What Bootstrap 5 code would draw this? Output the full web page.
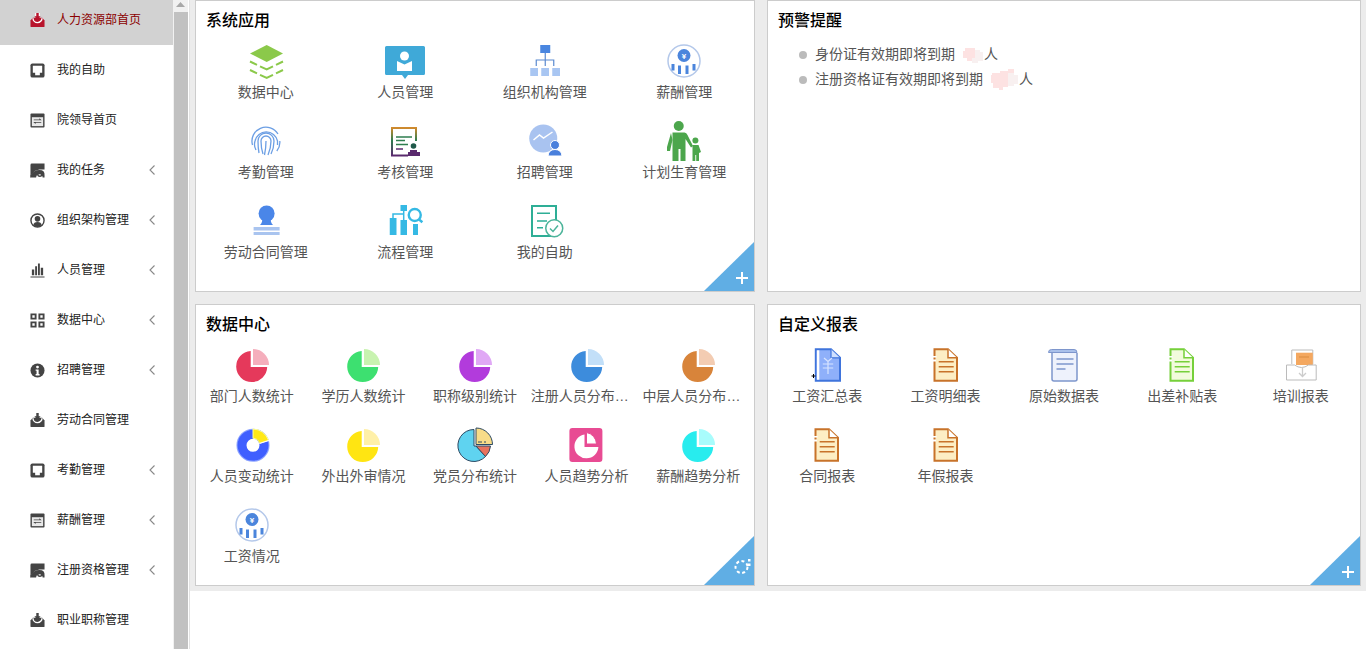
<!DOCTYPE html>
<html lang="zh-CN">
<head>
  <meta charset="UTF-8" />
  <meta name="viewport" content="width=device-width, initial-scale=1.0" />
  <title>人力资源部首页</title>
  <link href="https://cdn.jsdelivr.net/npm/bootstrap@5.3.0/dist/css/bootstrap.min.css" rel="stylesheet" />
  <style>
    html, body { height: 649px; overflow: hidden; }
    body { font-family: "Liberation Sans", "Noto Sans CJK SC", sans-serif; background: #fff; }
    .sprite { position: absolute; width: 0; height: 0; }

    /* left menu */
    .side-wrap { width: 190px; height: 649px; flex: none; }
    .side-menu { width: 173px; flex: none; overflow: hidden; }
    .side-link { height: 50px; padding: 0 18px 0 30px; color: #222; font-size: 12px; gap: 12px; }
    .side-link:hover { color: #222; }
    .side-link.is-on { height: 45px; padding-bottom: 5px; background: #d2d2d2; color: #8b0000; }
    .side-link.is-on .side-ico { color: #b8142c; }
    .side-ico { width: 15px; height: 15px; color: #444; flex: none; }
    .side-arrow { width: 6px; height: 10px; margin-left: auto; fill: none; stroke: #888; stroke-width: 1.1; flex: none; }
    .side-track { width: 15px; background: #f1f1f1; flex: none; }
    .side-track svg { display: block; width: 15px; height: 12px; fill: #a8a8a8; }
    .side-thumb { flex: 1; margin-left: 1px; background: #c1c1c1; }
    .side-edge { width: 2px; border-right: 1px solid #e2e2e2; flex: none; }

    /* dashboard */
    .board { flex: 1; height: 591px; background: #ececec; padding: 0 5px 5px; display: grid; grid-template-columns: 560px 594px; grid-template-rows: 292px 282px; gap: 12px; }
    .panel { border: 1px solid #ccc; border-radius: 0; overflow: hidden; }
    .panel-title { height: 39px; line-height: 39px; padding-left: 10px; font-size: 16px; font-weight: 500; color: #000; margin: 0; }
    .app-cell { height: 80px; font-size: 14px; color: #555; text-align: center; }
    .app-ico { display: block; width: 44px; height: 44px; margin: 0 auto -2px; }
    .app-name { line-height: 20px; }
    .corner-tag { position: absolute; right: 0; bottom: 0; width: 50px; height: 49px; }

    .warn-list { margin: 2px 0 0; padding-left: 31px; font-size: 14px; color: #555; }
    .warn-list li { height: 25px; }
    .warn-dot { width: 8px; height: 8px; border-radius: 50%; background: #bbb; flex: none; }
    .warn-blob { height: 24px; margin-left: 7px; vertical-align: middle; }

    .pie-red { --a: #e5395b; --b: #f5aebc; }
    .pie-green { --a: #3de070; --b: #c8f3b0; }
    .pie-purple { --a: #b23bdc; --b: #e0a8f5; }
    .pie-blue { --a: #3d8cdc; --b: #c2dff8; }
    .pie-orange { --a: #d8843a; --b: #f3ccb2; }
    .pie-yellow { --a: #ffe512; --b: #fff0a8; }
    .pie-cyan { --a: #28ecee; --b: #a8fcfc; }
    .doc-orange { --a: #c8732a; --b: #fdeec4; }
    .doc-green { --a: #76d03a; --b: #f2fbdc; }
  </style>
</head>
<body>
  <svg class="sprite" aria-hidden="true">
    <defs>
      <linearGradient id="g-check" x1="0" y1="0" x2="0" y2="1">
        <stop offset="0" stop-color="#d08a2e" />
        <stop offset=".45" stop-color="#2e7d4f" />
        <stop offset="1" stop-color="#5a2a6e" />
      </linearGradient>
    </defs>

    <!-- menu icons -->
    <symbol id="m-tray" viewBox="0 0 16 16">
      <path fill="currentColor" d="M.5 8 3 5h10l2.500 3v6q0 1-1 1h-13q-1 0-1-1z" />
      <path fill="none" stroke="#fff" stroke-width="1.500" d="M3.200 5.500a4.800 4.800 0 0 0 9.600 0" />
      <path fill="#fff" d="M5.500 0h5v4h-5z" />
      <path fill="currentColor" d="M6.700 0h2.600v3.500h2L8 7.500l-3.300-4h2z" />
    </symbol>
    <symbol id="m-port" viewBox="0 0 16 16">
      <rect fill="currentColor" x=".5" y=".5" width="15" height="15" rx="2" />
      <path fill="#fff" d="M3 3h10v7.500h-2.500V13h-5v-2.500H3z" />
    </symbol>
    <symbol id="m-swap" viewBox="0 0 16 16">
      <rect fill="currentColor" x=".5" y=".5" width="15" height="15" rx="1" />
      <rect fill="#e8e8e8" x="2" y="4.500" width="12" height="9.500" />
      <path fill="currentColor" d="M4 7h6V5.500L12.500 7.800H4zM12 10.300H6v1.500L3.500 9.500H12z" />
    </symbol>
    <symbol id="m-scan" viewBox="0 0 16 16">
      <path fill="currentColor" d="M2 .5h13.500V7H10L5 8.500 1 13V15.500H.5V2q0-1.500 1.500-1.500z" />
      <path fill="currentColor" d="M.5 15.500V13Q4 7.500 10 7.500T15.500 13v2.500h-2q-.5-3.500-3.500-3.500t-3.500 3.500z" />
      <circle fill="none" stroke="currentColor" stroke-width="1.500" cx="10.500" cy="12" r="2.200" />
    </symbol>
    <symbol id="m-user" viewBox="0 0 16 16">
      <circle fill="none" stroke="currentColor" stroke-width="1.500" cx="8" cy="8" r="7" />
      <circle fill="currentColor" cx="8" cy="6.200" r="3" />
      <path fill="currentColor" d="M3.500 13q.5-3.500 4.500-3.500t4.500 3.500a7 7 0 0 1-9 0z" />
    </symbol>
    <symbol id="m-bars" viewBox="0 0 16 16">
      <path fill="currentColor" d="M2 7h2.500v6H2zM5.500 3.500H7.500V13h-2zM8.500.5h2V13h-2zM11.500 5H14v8h-2.500zM.5 14.500h15v1H.5z" />
    </symbol>
    <symbol id="m-grid" viewBox="0 0 16 16">
      <path fill="currentColor" fill-rule="evenodd" d="M.5.500h6.500V7H.5zM2.500 2.500V5H5V2.500zM9 .5h6.500V7H9zM11 2.500V5h2.500V2.500zM.5 9H7v6.500H.5zM2.500 11v2.500H5V11zM9 9h6.500v6.500H9zM11 11v2.500h2.500V11z" />
    </symbol>
    <symbol id="m-info" viewBox="0 0 16 16">
      <circle fill="currentColor" cx="8" cy="8" r="7.500" />
      <circle fill="#fff" cx="8" cy="4.300" r="1.500" />
      <path fill="#fff" d="M6 6.800h3.200v5h1v1.400H6v-1.400h1v-3.600H6z" />
    </symbol>

    <!-- app icons, all on the same 44 box -->
    <symbol id="a-layers" viewBox="0 0 44 44">
      <path fill="#8bc94a" d="M6 13.500 22.700 5 39 13.500 22.700 22z" />
      <path fill="none" stroke="#8bc94a" stroke-width="2" d="M6 21.500l7 3.300M16 26.300l6.700 3 6.300-3M32 24.800l7-3.300M6 30l7 3.300M16 34.800l6.700 3.200 6.300-3.200M32 33.300l7-3.300" />
    </symbol>
    <symbol id="a-person" viewBox="0 0 44 44">
      <path fill="#3fa9d8" d="M3.500 6h37q1.500 0 1.500 1.500v26q0 1.500-1.500 1.500H25l-3 4-3-4H3.500Q2 35 2 33.500v-26Q2 6 3.500 6z" />
      <circle fill="#fff" cx="21.500" cy="16" r="4.500" />
      <path fill="#fff" d="M14 21l7.500 3.500L29 21v10H14z" />
    </symbol>
    <symbol id="a-org" viewBox="0 0 44 44">
      <rect fill="#4a86e0" x="17.250" y="5" width="10" height="8" />
      <path fill="none" stroke="#5b8ad0" stroke-width="1.200" d="M22.250 13v13M13.250 26v-6h17.500v6" />
      <path fill="#a9c6f2" d="M7.250 28H15v8H7.250zM18.250 28H26v8h-7.750zM29.250 28H37v8h-7.750z" />
    </symbol>
    <symbol id="a-pay" viewBox="0 0 44 44">
      <circle fill="none" stroke="#b4c8ea" stroke-width="1.500" cx="22" cy="21" r="16" />
      <circle fill="#4b85dc" cx="22" cy="15.500" r="6.500" />
      <text x="22" y="18.500" text-anchor="middle" font-size="8" font-weight="700" fill="#fff">¥</text>
      <path fill="#4b85dc" d="M9.500 24h3v6.500h-3zM16 25.500h3V34h-3zM23.500 25.500h3V34h-3zM30.500 24h3v6.500h-3z" />
    </symbol>
    <symbol id="a-finger" viewBox="0 0 44 44">
      <g fill="none" stroke="#6c9fe4" stroke-width="1.300">
        <path d="M8.500 25A14 14 0 0 1 34 14M35.800 21a14 14 0 0 1-3 10" />
        <path d="M12 30a11.500 11.500 0 0 1-1-9A11.500 11.500 0 0 1 33.500 21v4" />
        <path d="M15 33q-1-5-1-12a8 8 0 0 1 16 0q0 7-3 13" />
        <path d="M19 34q-2-6-2-13a5 5 0 0 1 10 0q0 7-3 14" />
        <path d="M22 21q0 7-1.500 14" />
      </g>
    </symbol>
    <symbol id="a-audit" viewBox="0 0 44 44">
      <path fill="none" stroke="url(#g-check)" stroke-width="2" d="M25 35.500H9V8h24v13" />
      <path fill="none" stroke="#2e7d4f" stroke-width="1.500" d="M13 17h16M13 20.500h9M13 24.500h12" />
      <path fill="none" stroke="#5a2a6e" stroke-width="1.500" d="M13 29h7" />
      <circle fill="#1f5a4a" cx="30.500" cy="26" r="2.800" />
      <path fill="#5a2a6e" d="M27 30h7v2h3v4H25v-4h2z" />
    </symbol>
    <symbol id="a-hire" viewBox="0 0 44 44">
      <circle fill="#a9c3f0" cx="20.250" cy="18.500" r="14" />
      <path fill="none" stroke="#fff" stroke-width="1.500" d="M10.500 20l6-5 4 3 9-6" />
      <circle fill="#4a80dc" stroke="#fff" cx="32" cy="25" r="4.500" />
      <path fill="#4a80dc" stroke="#fff" d="M25 36q.5-6.500 7-6.500t7 6.500z" />
    </symbol>
    <symbol id="a-family" viewBox="0 0 44 44">
      <g fill="#4ca64c">
        <circle cx="16.750" cy="6" r="5" />
        <path d="M10.500 12.500h12q2 0 3 2.500l5.500 11-2 1.500-5.500-8.500V41h-5V29h-2v12h-6z" />
        <path d="M9 13 5 27v4h3l2.500-11z" />
        <circle cx="33.400" cy="20.500" r="3" />
        <path d="M30.500 25h6l2.500 7-2 1v8h-2.800v-6h-.9v6h-2.800v-9z" />
      </g>
    </symbol>
    <symbol id="a-stamp" viewBox="0 0 44 44">
      <circle fill="#4a86e8" cx="22.600" cy="13.500" r="8" />
      <path fill="#4a86e8" d="M18 18q1 4-2 7h13q-3-3-2-7z" />
      <path fill="#a9c4ef" d="M9.600 27h26v3.500h-26zM9.600 32h26v3h-26z" />
    </symbol>
    <symbol id="a-flow" viewBox="0 0 44 44">
      <g fill="#35b9e4">
        <path d="M17.500 5H24v6h-6.500zM6.750 18h6.750v17H6.750zM17.500 20H24v15h-6.500zM30 24h5v11h-5z" />
      </g>
      <g fill="none" stroke="#35b9e4">
        <path stroke-width="1.500" d="M10 18v-4h10.700v-3M20.700 14v6" />
        <circle stroke-width="2.400" cx="31.750" cy="15" r="6" />
        <path stroke-width="2.400" d="M36 19.500l3.400 2.800" />
      </g>
    </symbol>
    <symbol id="a-selfdoc" viewBox="0 0 44 44">
      <path fill="none" stroke="#2eae96" stroke-width="2" d="M9 6h24v30H9z" />
      <path fill="none" stroke="#2eae96" stroke-width="1.500" d="M14 13.300h13M14 21h10M14 27.700h6" />
      <circle fill="#fff" stroke="#4cb49a" stroke-width="1.500" cx="31.250" cy="28.300" r="8.500" />
      <path fill="none" stroke="#4cb49a" stroke-width="1.500" d="M27 28.500l3 3 5-6" />
    </symbol>

    <!-- data centre -->
    <symbol id="a-pie" viewBox="0 0 44 44">
      <path fill="var(--a)" d="M20.700 7.030A15.500 15.500 0 1 0 37.200 23H20.700z" />
      <path fill="var(--b)" d="M23 5a16 16 0 0 1 16 16H23z" />
    </symbol>
    <symbol id="a-donut" viewBox="0 0 44 44">
      <circle fill="none" stroke="#8ea5ff" stroke-width="1.500" cx="23" cy="21.300" r="15.800" />
      <circle fill="none" stroke="#3f5fff" stroke-width="9" cx="23" cy="21.300" r="11" />
      <path fill="#ffe818" stroke="#ffff9a" d="M23 5a16.500 16.500 0 0 1 15.500 11.300l-9 3A7 7 0 0 0 23 14.300z" />
      <path fill="none" stroke="#fff" d="M29.500 19.500l9.500-3" />
    </symbol>
    <symbol id="a-party" viewBox="0 0 44 44">
      <g stroke="#2d4a63" stroke-width="1">
        <path fill="#5fd3f0" d="M21 5.500a16 16 0 1 0 11.500 27L23 22h-2z" />
        <path fill="#e8735e" d="M23 22h14.500a16 16 0 0 1-5 10.500z" />
        <path fill="#f8dc88" d="M23 4a16.500 16.500 0 0 1 16.500 16.500H23z" />
      </g>
      <path fill="none" stroke="#2d4a63" d="M25 18h4M31 18h2" />
    </symbol>
    <symbol id="a-trend" viewBox="0 0 44 44">
      <rect fill="#e84b93" x="4.400" y="4" width="33" height="34" rx="3" />
      <path fill="#fff" d="M19.500 10.500A12 12 0 1 0 33.400 23H19.500z" />
      <path fill="#fff" stroke="#e84b93" stroke-width="1" d="M21.500 8.500a12 12 0 0 1 10 11.500h-10z" />
    </symbol>

    <!-- reports -->
    <symbol id="a-doc" viewBox="0 0 44 44">
      <path fill="var(--b)" stroke="var(--a)" stroke-width="2" d="M10.500 5.300H24l9 8.500v22.900H10.500z" />
      <path fill="#fff" d="M9 12h3.500v1.500H9zM9 15.500h3v2H9z" />
      <path fill="#fff" stroke="var(--a)" stroke-width="1.500" d="M24 5.300v8.500h9" />
      <path fill="none" stroke="var(--a)" stroke-width="1.500" d="M14.700 17.700h15M14.700 22.700h15M14.700 27.700h15" />
    </symbol>
    <symbol id="a-docblue" viewBox="0 0 44 44">
      <path fill="#8fb0fa" stroke="#3f74dc" stroke-width="2" d="M10.800 5.300H26l9 8.500v22.900H10.800z" />
      <path fill="#fff" d="M11.800 6.300h2.500v29.400h-2.500z" />
      <path fill="#cfe0ff" stroke="#3f74dc" stroke-width="1.200" d="M26 5.300v8.500h9" />
      <path fill="none" stroke="#d8e4ff" stroke-width="1.200" d="M19 14l4 3.500 4-3.500M17.800 20h10.400M17.800 24h10.400M23 17.500V30" />
      <path fill="none" stroke="#000" d="M8.500 30v4M6.500 32h4" />
    </symbol>
    <symbol id="a-scroll" viewBox="0 0 44 44">
      <path fill="#eef2fc" stroke="#7e96cc" stroke-width="1.500" d="M10 9v26q0 2 2 2h21q2 0 2-2V9" />
      <path fill="#a9c0ea" stroke="#7e96cc" d="M6.500 8.500q0-3 3-3H32q3 0 3 3H10z" />
      <path fill="none" stroke="#7e96cc" stroke-width="1.400" d="M14.500 15h17M14.500 20h17M14.500 25h9" />
    </symbol>
    <symbol id="a-tray" viewBox="0 0 44 44">
      <path fill="none" stroke="#bbb" d="M12.800 20V6h21v14" />
      <path fill="#f4a860" d="M17 8.700h16.800V21H17z" />
      <path fill="none" stroke="#d98c40" d="M20 13h10" />
      <path fill="#fff" stroke="#bbb" d="M7.500 21h8q7 5 14 0h7.700v15H7.500z" />
      <path fill="none" stroke="#ccc" stroke-width="1.300" d="M23.500 23v9M20 29l3.500 3.500L27 29" />
    </symbol>

    <symbol id="c-plus" viewBox="0 0 50 49">
      <path fill="#60aee4" d="M0 49 50 0v49z" />
      <path fill="none" stroke="#fff" stroke-width="2" d="M32 36h12M38 30v12" />
    </symbol>
    <symbol id="c-gear" viewBox="0 0 50 49">
      <path fill="#60aee4" d="M0 49 50 0v49z" />
      <circle fill="none" stroke="#fff" stroke-width="2" stroke-dasharray="3 2.500" cx="37.500" cy="31" r="6" />
      <path fill="#fff" d="M44 23h2.500v2.500H44zM44 27.500h2.500V30H44z" />
    </symbol>
  </svg>

  <div class="d-flex">
    <aside class="side-wrap d-flex">
      <nav class="side-menu nav flex-column flex-nowrap">
        <a class="side-link is-on nav-link d-flex align-items-center" href="#"><svg class="side-ico"><use href="#m-tray" /></svg>人力资源部首页</a>
        <a class="side-link nav-link d-flex align-items-center" href="#"><svg class="side-ico"><use href="#m-port" /></svg>我的自助</a>
        <a class="side-link nav-link d-flex align-items-center" href="#"><svg class="side-ico"><use href="#m-swap" /></svg>院领导首页</a>
        <a class="side-link nav-link d-flex align-items-center" href="#"><svg class="side-ico"><use href="#m-scan" /></svg>我的任务<svg class="side-arrow" viewBox="0 0 6 10"><path d="M5.500.5 1 5l4.500 4.500" /></svg></a>
        <a class="side-link nav-link d-flex align-items-center" href="#"><svg class="side-ico"><use href="#m-user" /></svg>组织架构管理<svg class="side-arrow" viewBox="0 0 6 10"><path d="M5.500.5 1 5l4.500 4.500" /></svg></a>
        <a class="side-link nav-link d-flex align-items-center" href="#"><svg class="side-ico"><use href="#m-bars" /></svg>人员管理<svg class="side-arrow" viewBox="0 0 6 10"><path d="M5.500.5 1 5l4.500 4.500" /></svg></a>
        <a class="side-link nav-link d-flex align-items-center" href="#"><svg class="side-ico"><use href="#m-grid" /></svg>数据中心<svg class="side-arrow" viewBox="0 0 6 10"><path d="M5.500.5 1 5l4.500 4.500" /></svg></a>
        <a class="side-link nav-link d-flex align-items-center" href="#"><svg class="side-ico"><use href="#m-info" /></svg>招聘管理<svg class="side-arrow" viewBox="0 0 6 10"><path d="M5.500.5 1 5l4.500 4.500" /></svg></a>
        <a class="side-link nav-link d-flex align-items-center" href="#"><svg class="side-ico"><use href="#m-tray" /></svg>劳动合同管理</a>
        <a class="side-link nav-link d-flex align-items-center" href="#"><svg class="side-ico"><use href="#m-port" /></svg>考勤管理<svg class="side-arrow" viewBox="0 0 6 10"><path d="M5.500.5 1 5l4.500 4.500" /></svg></a>
        <a class="side-link nav-link d-flex align-items-center" href="#"><svg class="side-ico"><use href="#m-swap" /></svg>薪酬管理<svg class="side-arrow" viewBox="0 0 6 10"><path d="M5.500.5 1 5l4.500 4.500" /></svg></a>
        <a class="side-link nav-link d-flex align-items-center" href="#"><svg class="side-ico"><use href="#m-scan" /></svg>注册资格管理<svg class="side-arrow" viewBox="0 0 6 10"><path d="M5.500.5 1 5l4.500 4.500" /></svg></a>
        <a class="side-link nav-link d-flex align-items-center" href="#"><svg class="side-ico"><use href="#m-tray" /></svg>职业职称管理</a>
      </nav>
      <div class="side-track d-flex flex-column">
        <svg viewBox="0 0 15 12"><path d="M7.500 2 12 7H3z" /></svg>
        <div class="side-thumb"></div>
      </div>
      <div class="side-edge"></div>
    </aside>

    <main class="board">
      <section class="panel card">
        <h2 class="panel-title">系统应用</h2>
        <div class="row row-cols-4 g-0">
          <div class="col app-cell"><svg class="app-ico"><use href="#a-layers" /></svg><div class="app-name">数据中心</div></div>
          <div class="col app-cell"><svg class="app-ico"><use href="#a-person" /></svg><div class="app-name">人员管理</div></div>
          <div class="col app-cell"><svg class="app-ico"><use href="#a-org" /></svg><div class="app-name">组织机构管理</div></div>
          <div class="col app-cell"><svg class="app-ico"><use href="#a-pay" /></svg><div class="app-name">薪酬管理</div></div>
          <div class="col app-cell"><svg class="app-ico"><use href="#a-finger" /></svg><div class="app-name">考勤管理</div></div>
          <div class="col app-cell"><svg class="app-ico"><use href="#a-audit" /></svg><div class="app-name">考核管理</div></div>
          <div class="col app-cell"><svg class="app-ico"><use href="#a-hire" /></svg><div class="app-name">招聘管理</div></div>
          <div class="col app-cell"><svg class="app-ico"><use href="#a-family" /></svg><div class="app-name">计划生育管理</div></div>
          <div class="col app-cell"><svg class="app-ico"><use href="#a-stamp" /></svg><div class="app-name">劳动合同管理</div></div>
          <div class="col app-cell"><svg class="app-ico"><use href="#a-flow" /></svg><div class="app-name">流程管理</div></div>
          <div class="col app-cell"><svg class="app-ico"><use href="#a-selfdoc" /></svg><div class="app-name">我的自助</div></div>
        </div>
        <svg class="corner-tag"><use href="#c-plus" /></svg>
      </section>

      <section class="panel card">
        <h2 class="panel-title">预警提醒</h2>
        <ul class="warn-list list-unstyled">
          <li class="d-flex align-items-center gap-2"><span class="warn-dot"></span><span>身份证有效期即将到期<svg class="warn-blob" width="22" viewBox="0 0 22 24"><path fill="#fde2e2" d="M3 5h10v2h3v13h-6v-2H5v-3H1V8h2z" /><path fill="#f8f0f0" d="M13 7h5v2h3v9h-5v2h-6v-5h3z" /></svg>人</span></li>
          <li class="d-flex align-items-center gap-2"><span class="warn-dot"></span><span>注册资格证有效期即将到期<svg class="warn-blob" width="29" viewBox="0 0 29 24"><path fill="#fde2e2" d="M2 5h8V3h8V1h6v4h-6v14h-5v3H9v-2H3v-5H1V7h1z" /><path fill="#f8f0f0" d="M18 5h6v2h4v9h-4v2h-6z" /></svg>人</span></li>
        </ul>
      </section>

      <section class="panel card">
        <h2 class="panel-title">数据中心</h2>
        <div class="row row-cols-5 g-0">
          <div class="col app-cell pie-red"><svg class="app-ico"><use href="#a-pie" /></svg><div class="app-name text-truncate">部门人数统计</div></div>
          <div class="col app-cell pie-green"><svg class="app-ico"><use href="#a-pie" /></svg><div class="app-name text-truncate">学历人数统计</div></div>
          <div class="col app-cell pie-purple"><svg class="app-ico"><use href="#a-pie" /></svg><div class="app-name text-truncate">职称级别统计</div></div>
          <div class="col app-cell pie-blue"><svg class="app-ico"><use href="#a-pie" /></svg><div class="app-name text-truncate">注册人员分布统计表</div></div>
          <div class="col app-cell pie-orange"><svg class="app-ico"><use href="#a-pie" /></svg><div class="app-name text-truncate">中层人员分布统计表</div></div>
          <div class="col app-cell"><svg class="app-ico"><use href="#a-donut" /></svg><div class="app-name text-truncate">人员变动统计</div></div>
          <div class="col app-cell pie-yellow"><svg class="app-ico"><use href="#a-pie" /></svg><div class="app-name text-truncate">外出外审情况</div></div>
          <div class="col app-cell"><svg class="app-ico"><use href="#a-party" /></svg><div class="app-name text-truncate">党员分布统计</div></div>
          <div class="col app-cell"><svg class="app-ico"><use href="#a-trend" /></svg><div class="app-name text-truncate">人员趋势分析</div></div>
          <div class="col app-cell pie-cyan"><svg class="app-ico"><use href="#a-pie" /></svg><div class="app-name text-truncate">薪酬趋势分析</div></div>
          <div class="col app-cell"><svg class="app-ico"><use href="#a-pay" /></svg><div class="app-name text-truncate">工资情况</div></div>
        </div>
        <svg class="corner-tag"><use href="#c-gear" /></svg>
      </section>

      <section class="panel card">
        <h2 class="panel-title">自定义报表</h2>
        <div class="row row-cols-5 g-0">
          <div class="col app-cell"><svg class="app-ico"><use href="#a-docblue" /></svg><div class="app-name">工资汇总表</div></div>
          <div class="col app-cell doc-orange"><svg class="app-ico"><use href="#a-doc" /></svg><div class="app-name">工资明细表</div></div>
          <div class="col app-cell"><svg class="app-ico"><use href="#a-scroll" /></svg><div class="app-name">原始数据表</div></div>
          <div class="col app-cell doc-green"><svg class="app-ico"><use href="#a-doc" /></svg><div class="app-name">出差补贴表</div></div>
          <div class="col app-cell"><svg class="app-ico"><use href="#a-tray" /></svg><div class="app-name">培训报表</div></div>
          <div class="col app-cell doc-orange"><svg class="app-ico"><use href="#a-doc" /></svg><div class="app-name">合同报表</div></div>
          <div class="col app-cell doc-orange"><svg class="app-ico"><use href="#a-doc" /></svg><div class="app-name">年假报表</div></div>
        </div>
        <svg class="corner-tag"><use href="#c-plus" /></svg>
      </section>
    </main>
  </div>

  <script src="https://cdn.jsdelivr.net/npm/bootstrap@5.3.0/dist/js/bootstrap.bundle.min.js"></script>
</body>
</html>
